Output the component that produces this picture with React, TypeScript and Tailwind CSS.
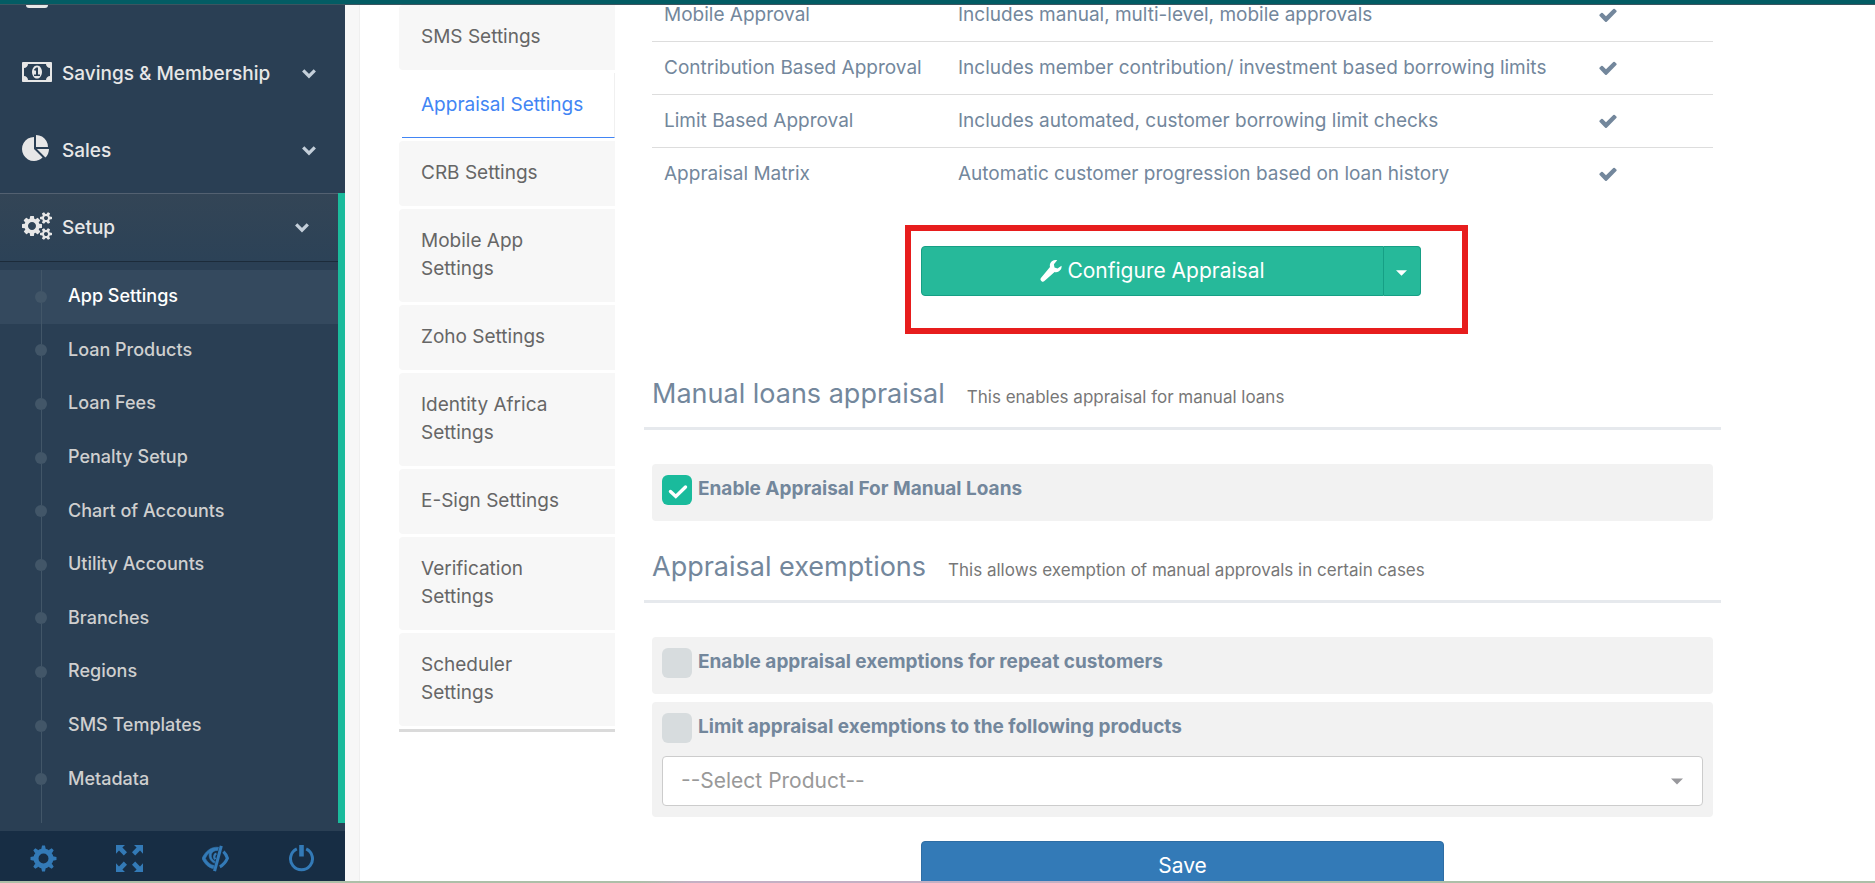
import React, { useState } from "react"

interface IconProps {
  className?: string
}

const MoneyIcon = ({ className }: IconProps) => (
  <svg viewBox="0 0 1920 1792" fill="currentColor" className={className} aria-hidden="true">
    <path d="M768 1152h384v-96h-128v-448h-114l-148 137 77 80q42-37 55-57h2v288h-128v96zm512-256q0 70-21 142t-59.5 134-101.5 101-138 39-138-39-101.5-101-59.5-134-21-142 21-142 59.5-134 101.5-101 138-39 138 39 101.5 101 59.5 134 21 142zm512 256v-512q-106 0-181-75t-75-181h-1152q0 106-75 181t-181 75v512q106 0 181 75t75 181h1152q0-106 75-181t181-75zm128-832v1152q0 26-19 45t-45 19h-1792q-26 0-45-19t-19-45v-1152q0-26 19-45t45-19h1792q26 0 45 19t19 45z" />
  </svg>
)

const PieIcon = ({ className }: IconProps) => (
  <svg viewBox="0 0 1920 1792" fill="currentColor" className={className} aria-hidden="true">
    <path d="M768 890l546 546q-106 108-247.5 168t-298.5 60q-209 0-385.5-103t-279.5-279.5-103-385.5 103-385.5 279.5-279.5 385.5-103v762zm187 6h773q0 157-60 298.5t-168 247.5zm709-128h-768v-768q209 0 385.5 103t279.5 279.5 103 385.5z" />
  </svg>
)

const CogsIcon = ({ className }: IconProps) => (
  <svg viewBox="0 0 1920 1792" fill="currentColor" className={className} aria-hidden="true">
    <path d="M896 896q0-106-75-181t-181-75-181 75-75 181 75 181 181 75 181-75 75-181zm768 512q0-52-38-90t-90-38-90 38-38 90q0 53 37.5 90.5t90.5 37.5 90.5-37.5 37.5-90.5zm0-1024q0-52-38-90t-90-38-90 38-38 90q0 53 37.5 90.5t90.5 37.5 90.5-37.5 37.5-90.5zm-384 421v185q0 10-7 19.5t-16 10.5l-155 24q-11 35-32 76 34 48 90 115 7 11 7 20 0 12-7 19-23 30-82.5 89.5t-78.5 59.5q-11 0-21-7l-115-90q-37 19-77 31-11 108-23 155-7 24-30 24h-186q-11 0-20-7.5t-10-17.5l-23-153q-34-10-75-31l-118 89q-7 7-20 7-11 0-21-8-144-133-144-160 0-9 7-19 10-14 41-53t47-61q-23-44-35-82l-152-24q-10-1-17-9.5t-7-19.5v-185q0-10 7-19.5t16-10.5l155-24q11-35 32-76-34-48-90-115-7-11-7-20 0-12 7-20 22-30 82-89t79-59q11 0 21 7l115 90q34-18 77-32 11-108 23-154 7-24 30-24h186q11 0 20 7.5t10 17.5l23 153q34 10 75 31l118-89q8-7 20-7 11 0 21 8 144 133 144 160 0 8-7 19-12 16-42 54t-45 60q23 48 34 82l152 23q10 2 17 10.5t7 19.5zm640 533v140q0 16-149 31-12 27-30 52 51 113 51 138 0 4-4 7-122 71-124 71-8 0-46-47t-52-68q-20 2-30 2t-30-2q-14 21-52 68t-46 47q-2 0-124-71-4-3-4-7 0-25 51-138-18-25-30-52-149-15-149-31v-140q0-16 149-31 13-29 30-52-51-113-51-138 0-4 4-7 4-2 35-20t59-34 30-16q8 0 46 46.5t52 67.5q20-2 30-2t30 2q51-71 92-112l6-2q4 0 124 70 4 3 4 7 0 25-51 138 17 23 30 52 149 15 149 31zm0-1024v140q0 16-149 31-12 27-30 52 51 113 51 138 0 4-4 7-122 71-124 71-8 0-46-47t-52-68q-20 2-30 2t-30-2q-14 21-52 68t-46 47q-2 0-124-71-4-3-4-7 0-25 51-138-18-25-30-52-149-15-149-31v-140q0-16 149-31 13-29 30-52-51-113-51-138 0-4 4-7 4-2 35-20t59-34 30-16q8 0 46 46.5t52 67.5q20-2 30-2t30 2q51-71 92-112l6-2q4 0 124 70 4 3 4 7 0 25-51 138 17 23 30 52 149 15 149 31z" />
  </svg>
)

const ChevronIcon = ({ className }: IconProps) => (
  <svg viewBox="0 0 14 10" fill="none" stroke="currentColor" strokeWidth="3.2" className={className} aria-hidden="true">
    <path d="M1.2 1.4L7 7.2l5.8-5.8" />
  </svg>
)

const CheckIcon = ({ className }: IconProps) => (
  <svg viewBox="0 0 1792 1792" fill="currentColor" className={className} aria-hidden="true">
    <path d="M1671 566q0 40-28 68l-724 724-136 136q-28 28-68 28t-68-28l-136-136-362-362q-28-28-28-68t28-68l136-136q28-28 68-28t68 28l294 295 656-657q28-28 68-28t68 28l136 136q28 28 28 68z" />
  </svg>
)

const WrenchIcon = ({ className }: IconProps) => (
  <svg viewBox="0 0 22 22" fill="currentColor" className={className} aria-hidden="true">
    <path d="M17.200.3c-3-.8-6 .6-7 3.300-.5 1.200-.5 2.200-.2 3.300L.9 18c-.7.900-.6 2 .2 2.700l.5.5c.8.8 2 .7 2.800-.1L14.600 12c1.400.4 2.800.2 4-.5 2.200-1.200 3.300-3.300 2.900-5.700l-4 2.600-3-1-.6-3.200z" />
  </svg>
)

const CogIcon = ({ className }: IconProps) => (
  <svg viewBox="0 0 26 26" className={className} aria-hidden="true">
    <g fill="currentColor">
      <path d="M10.800 4L11.600.5h2.800L15.200 4zM10.800 22l.8 3.500h2.800l.8-3.500zM4 10.800L.5 11.600v2.800L4 15.200zM22 10.800l3.500.8v2.800l-3.500.8z" />
      <path d="M10.800 4L11.600.5h2.800L15.200 4zM10.800 22l.8 3.500h2.800l.8-3.500zM4 10.800L.5 11.600v2.800L4 15.200zM22 10.800l3.500.8v2.800l-3.500.8z" transform="rotate(45 13 13)" />
    </g>
    <circle cx="13" cy="13" r="7.200" fill="none" stroke="currentColor" strokeWidth="4.800" />
  </svg>
)

const FullscreenIcon = ({ className }: IconProps) => (
  <svg viewBox="0 0 27 27" fill="currentColor" className={className} aria-hidden="true">
    <path d="M0 0h9L6.400 2.600l4.600 4.600L7.800 10.400 3 5.600 0 8.800z" />
    <path d="M27 0v8.800l-3-3.200-4.800 4.800L16 7.200l4.600-4.600L18 0z" />
    <path d="M0 27v-8.800l3 3.200 4.800-4.800L11 19.800l-4.600 4.600L9 27z" />
    <path d="M27 27h-9l2.600-2.600L16 19.800l3.200-3.200 4.800 4.800 3-3.200z" />
  </svg>
)

const EyeCloseIcon = ({ className }: IconProps) => (
  <svg viewBox="0 0 28 27" fill="none" stroke="currentColor" className={className} aria-hidden="true">
    <path
      d="M17.200 1.900C9.500.9 3.500 6 0 13.400c2.600 5.600 6.500 9.500 11.700 10.500l.8-3.100C8.600 20 5.600 17.400 3.500 13.400 4.600 11 6 9 7.600 7.600c-.9 4.500.7 8.700 5.300 10.800l.5-2c-2.800-1.400-4.200-3.800-3.700-7 .4-2.400 2.900-4.400 6.600-4.300z"
      fill="currentColor"
      strokeWidth="0.6"
    />
    <path d="M20 .3L13 26.700" strokeWidth="3.2" />
    <path d="M22.200 6.400c1.800 1.700 3.200 4 4.200 6.800-1.900 4.300-4.600 7.300-7.900 8.900" strokeWidth="3.2" />
    <path d="M15 8.500c-1.800.4-2.700 2.200-2.100 4.500l1.100 1.200" strokeWidth="2.400" />
  </svg>
)

const PowerIcon = ({ className }: IconProps) => (
  <svg viewBox="0 0 26 27" fill="none" stroke="currentColor" className={className} aria-hidden="true">
    <path d="M8.300 3.900a11 11 0 1 0 9.400 0" strokeWidth="3" />
    <path d="M13 0v11.500" strokeWidth="4.600" />
  </svg>
)

const CaretIcon = ({ className }: IconProps) => (
  <svg viewBox="0 0 12 6" fill="currentColor" className={className} aria-hidden="true">
    <path d="M0 0h12L6 6z" />
  </svg>
)

const menuItems = [
  { label: "Savings & Membership", icon: MoneyIcon },
  { label: "Sales", icon: PieIcon },
]

const setupItems = [
  "App Settings",
  "Loan Products",
  "Loan Fees",
  "Penalty Setup",
  "Chart of Accounts",
  "Utility Accounts",
  "Branches",
  "Regions",
  "SMS Templates",
  "Metadata",
]

const tabs = [
  "SMS Settings",
  "Appraisal Settings",
  "CRB Settings",
  "Mobile App Settings",
  "Zoho Settings",
  "Identity Africa Settings",
  "E-Sign Settings",
  "Verification Settings",
  "Scheduler Settings",
]

const approvals = [
  { name: "Mobile Approval", description: "Includes manual, multi-level, mobile approvals" },
  { name: "Contribution Based Approval", description: "Includes member contribution/ investment based borrowing limits" },
  { name: "Limit Based Approval", description: "Includes automated, customer borrowing limit checks" },
  { name: "Appraisal Matrix", description: "Automatic customer progression based on loan history" },
]

const footerButtons = [
  { label: "Settings", icon: CogIcon },
  { label: "Full screen", icon: FullscreenIcon },
  { label: "Hide", icon: EyeCloseIcon },
  { label: "Log out", icon: PowerIcon },
]

const Sidebar = () => (
  <aside className="flex w-[345px] shrink-0 flex-col bg-[#2a3f54] font-medium text-[#e7e7e7]">
    {/* tail of the menu entry that is scrolled under the top bar */}
    <div className="h-[30px] shrink-0 px-[26px]">
      <div className="h-[3px] w-[22px] rounded-b-sm bg-[#e7e7e7]" />
    </div>

    <div className="shrink-0 pb-1 text-[19px]">
      {menuItems.map(({ label, icon: Icon }) => (
        <a key={label} href="#" className="flex h-[77px] items-center pr-[29px] pl-[22px]">
          <Icon className="mb-1 h-7 w-[30px]" />
          <span className="ml-[10px] flex-1 pt-0.5">{label}</span>
          <ChevronIcon className="h-[10px] w-[14px] text-[#c4cfda]" />
        </a>
      ))}
    </div>

    <div className="flex flex-1 flex-col border-r-[7px] border-[#1abb9c]">
      <a
        href="#"
        className="flex h-[69px] shrink-0 items-center border-t border-b border-t-[#536171] border-b-[#1c2b3a] bg-gradient-to-b from-[#334556] to-[#2c4257] pr-[29px] pl-[22px] text-[19px]"
      >
        <CogsIcon className="mb-1 h-7 w-[30px]" />
        <span className="ml-[10px] flex-1 pt-0.5">Setup</span>
        <ChevronIcon className="h-[10px] w-[14px] text-[#c4cfda]" />
      </a>
      <ul className="flex flex-1 flex-col pt-2 text-lg">
        {setupItems.map((item, index) => (
          <li key={item} className={index === 0 ? "flex flex-1 bg-[#34495e] text-white" : "flex flex-1 text-[#cfcfcf]"}>
            <a href="#" className="flex flex-1 items-center pl-[35px]">
              <span className="flex h-full w-3 flex-col items-center">
                <span className="w-px flex-1 bg-[#425668]" />
                <span className="size-3 rounded-full bg-[#425668]" />
                <span className="w-px flex-1 bg-[#425668]" />
              </span>
              <span className="mb-px ml-[21px]">{item}</span>
            </a>
          </li>
        ))}
        <li className="h-[17px] pl-[35px]" aria-hidden="true">
          <div className="flex h-full w-3 justify-center">
            <span className="w-px bg-[#425668]" />
          </div>
        </li>
      </ul>
    </div>

    <div className="mt-2 grid h-[50px] shrink-0 grid-cols-4 bg-[#172d44] pt-1">
      {footerButtons.map(({ label, icon: Icon }) => (
        <button key={label} type="button" aria-label={label} className="grid place-items-center text-[#337ab7]">
          <Icon className="size-[27px]" />
        </button>
      ))}
    </div>
  </aside>
)

const SettingsTabs = () => (
  <nav className="w-[216px] shrink-0 self-start pt-4">
    <ul className="flex flex-col gap-[3px] border-b-[3px] border-[#dadada] pb-[3px] text-[19px]/7">
      {tabs.map((tab) => (
        <li key={tab}>
          <a
            href="#"
            className={
              tab === "Appraisal Settings"
                ? "ml-[3px] block border-r border-b border-r-[#f0f0f0] border-b-[#4285f4] py-[18px] pl-[19px] text-[#4285f4]"
                : "block rounded-l border-b border-transparent bg-[#f7f7f7] py-[18px] pr-10 pl-[22px] text-[#666666]"
            }
          >
            {tab}
          </a>
        </li>
      ))}
    </ul>
  </nav>
)

interface SectionTitleProps {
  title: string
  hint: string
}

const SectionTitle = ({ title, hint }: SectionTitleProps) => (
  <h2 className="mb-[34px] flex items-baseline gap-[22px] border-b-[3px] border-[#e6e9ed] px-2 pb-[13px] text-[27px]/10">
    {title}
    <small className="text-[17px]/5 text-[#777777]">{hint}</small>
  </h2>
)

interface OptionProps {
  id: string
  label: string
  checked: boolean
  onChange: (checked: boolean) => void
}

const Option = ({ id, label, checked, onChange }: OptionProps) => (
  <div className="flex items-start gap-[6px]">
    <span className="grid place-items-center">
      <input
        id={id}
        type="checkbox"
        checked={checked}
        onChange={(e) => onChange(e.target.checked)}
        className="col-start-1 row-start-1 size-[30px] appearance-none rounded-md bg-[#d7dcde] checked:bg-[#1abb9c]"
      />
      {checked && (
        <svg viewBox="0 0 20 16" className="pointer-events-none col-start-1 row-start-1 mt-1 ml-0.5 h-4 w-5 text-white" aria-hidden="true">
          <path d="M2.500 7.500l5.300 5L17.500 3" fill="none" stroke="currentColor" strokeWidth="3.400" strokeLinecap="round" />
        </svg>
      )}
    </span>
    <label htmlFor={id} className="text-[19px]/7 font-bold">
      {label}
    </label>
  </div>
)

const AppraisalSettings = () => {
  const [manual, setManual] = useState(true)
  const [repeat, setRepeat] = useState(false)
  const [limit, setLimit] = useState(false)

  return (
    <form className="min-w-0 flex-1">
      <div className="px-2">
        <table className="w-full table-fixed text-left text-[19px]/7">
          <tbody>
            {approvals.map(({ name, description }) => (
              <tr key={name} className="border-[#dddddd] not-first:border-t">
                <td className="w-[294px] px-3 py-3 whitespace-nowrap">{name}</td>
                <td className="px-3 py-3">{description}</td>
                <td className="w-[127px] px-3 py-3">
                  <CheckIcon className="size-5" />
                </td>
              </tr>
            ))}
          </tbody>
        </table>
      </div>

      <div className="mt-[46px] grid grid-cols-4">
        <div className="relative col-span-2 col-start-2 px-2">
          <div className="mr-[23px] flex h-[50px] text-[21px] text-white">
            <button type="button" className="flex flex-1 items-center justify-center gap-[5px] rounded-l border border-[#169f85] bg-[#26b99a]">
              <WrenchIcon className="size-[22px]" />
              Configure Appraisal
            </button>
            <button
              type="button"
              aria-label="More appraisal actions"
              className="grid w-[37px] place-items-center rounded-r border border-l-0 border-[#169f85] bg-[#26b99a]"
            >
              <CaretIcon className="mt-1 h-[6px] w-[11px]" />
            </button>
          </div>
          {/* highlight frame */}
          <div className="pointer-events-none absolute -top-[21px] -right-4 -left-2 h-[109px] border-[6px] border-[#e71d1d]" />
        </div>
      </div>

      <div className="mt-[78px]">
        <SectionTitle title="Manual loans appraisal" hint="This enables appraisal for manual loans" />
        <div className="mx-2 rounded bg-[#f2f2f2] px-[10px] pt-[11px] pb-4">
          <Option id="manual" label="Enable Appraisal For Manual Loans" checked={manual} onChange={setManual} />
        </div>
      </div>

      <div className="mt-[26px]">
        <SectionTitle title="Appraisal exemptions" hint="This allows exemption of manual approvals in certain cases" />
        <div className="mx-2 rounded bg-[#f2f2f2] px-[10px] pt-[11px] pb-4">
          <Option id="repeat" label="Enable appraisal exemptions for repeat customers" checked={repeat} onChange={setRepeat} />
        </div>
        <div className="mx-2 mt-2 rounded bg-[#f2f2f2] px-[10px] py-[11px]">
          <Option id="limit" label="Limit appraisal exemptions to the following products" checked={limit} onChange={setLimit} />
          <div className="mt-[13px] grid items-center">
            <select
              aria-label="Product"
              className="col-start-1 row-start-1 h-[50px] w-full appearance-none rounded border border-[#cccccc] bg-white pr-12 pl-[18px] text-[21px] text-[#999999]"
            >
              <option>--Select Product--</option>
            </select>
            <CaretIcon className="pointer-events-none col-start-1 row-start-1 mr-5 h-[7px] w-3 justify-self-end text-[#98989c]" />
          </div>
        </div>
      </div>

      <div className="mt-6 grid grid-cols-4">
        <div className="col-span-2 col-start-2 px-2">
          <button type="button" className="h-[50px] w-full rounded border border-[#2e6da4] bg-[#337ab7] text-[21px] text-white">
            Save
          </button>
        </div>
      </div>
    </form>
  )
}

const App = () => (
  <div className="flex h-screen flex-col overflow-hidden bg-white font-['Inter','Liberation_Sans',sans-serif] text-[#73879c]">
    <div className="h-[5px] shrink-0 border-b border-[#3b5560] bg-[#035c64]" />
    <div className="flex min-h-0 flex-1">
      <Sidebar />
      <div className="w-[15px] shrink-0 border-r border-[#efefef] bg-[#f7f7f7]" />
      <main className="min-w-0 flex-1 overflow-hidden">
        <div className="-mt-4 flex gap-[29px] pr-[154px] pl-[39px]">
          <SettingsTabs />
          <AppraisalSettings />
        </div>
      </main>
    </div>
    <div className="h-[2px] shrink-0 bg-[linear-gradient(to_right,#adbfa8_34%,#c4b0c4_37%,#c4b0c4_63%,#adbfa8_66%)]" />
  </div>
)

export default App
